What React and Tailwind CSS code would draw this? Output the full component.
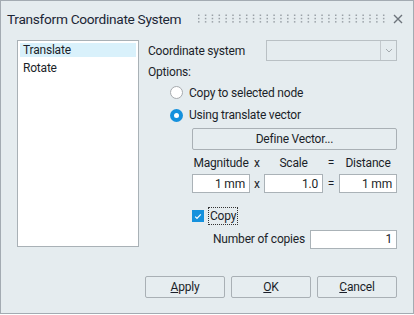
import React from "react";

function Radio({ checked }) {
  if (checked) {
    return (
      <span className="w-[13px] h-[13px] shrink-0 rounded-full bg-[#1591dd] flex items-center justify-center">
        <span className="w-[5px] h-[5px] rounded-full bg-white" />
      </span>
    );
  }
  return <span className="w-[13px] h-[13px] shrink-0 rounded-full bg-white border border-[#a6aaae]" />;
}

function Grip() {
  const cols = [];
  for (let i = 0; i < 28; i++) cols.push(i);
  return (
    <svg width="190" height="12" viewBox="0 0 190 12" className="block">
      {cols.map((i) =>
        [0, 1, 2].map((r) => (
          <rect key={i + "-" + r} x={i * 6.85} y={r * 3.3 + 1.5} width="1.5" height="1.5" fill="#9aa1a7" />
        ))
      )}
    </svg>
  );
}

function Btn({ children, className = "" }) {
  return (
    <div className={"h-[22px] border border-[#a9b0b5] rounded-[2px] bg-[#e6edf0] flex items-center justify-center text-[12px] tracking-[-0.2px] " + className}>
      {children}
    </div>
  );
}

function Field({ value, className = "" }) {
  return (
    <div className={"h-[19px] bg-white border border-[#aab2b7] flex items-center justify-end pr-[4px] text-[12px] whitespace-nowrap " + className}>
      {value}
    </div>
  );
}

export default function App() {
  return (
    <div className="w-[414px] h-[314px] bg-[#e5ecef] border border-[#a3abb2] font-['Roboto',sans-serif] text-[#1b1f29] flex flex-col whitespace-nowrap">
      {/* Title bar */}
      <div className="h-[36px] flex items-center pl-[6px] pr-[10px]">
        <span className="shrink-0 text-[13.7px] text-[#1c2635] tracking-[-0.3px]">Transform Coordinate System</span>
        <div className="ml-[17px] shrink-0">
          <Grip />
        </div>
        <div className="ml-auto">
          <svg width="10" height="10" viewBox="0 0 10 10" className="block">
            <path d="M1 1 L9 9 M9 1 L1 9" stroke="#6d747b" strokeWidth="1.4" />
          </svg>
        </div>
      </div>

      {/* Body */}
      <div className="flex pl-[16px] pr-[16px] mt-[3px]">
        <div className="w-[122px] h-[207px] shrink-0 bg-white border border-[#a9b1b6] p-[2px] text-[12px] tracking-[-0.2px]">
          <div className="h-[14px] bg-[#d9f1fb] pl-[3px] flex items-center">Translate</div>
          <div className="h-[21px] pl-[3px] flex items-center">Rotate</div>
        </div>

        <div className="ml-[9px] flex-1 flex flex-col text-[12px] tracking-[-0.2px]">
          <div className="h-[21px] flex items-center justify-between">
            <span>Coordinate system</span>
            <div className="w-[131px] h-[21px] border border-[#b9c0c4] bg-[#e5ecef] flex">
              <div className="flex-1" />
              <div className="w-[16px] border-l border-[#c3c9cd] flex items-center justify-center">
                <svg width="8" height="5" viewBox="0 0 8 5">
                  <path d="M1 1 L4 4 L7 1" stroke="#a4aaae" strokeWidth="1" fill="none" />
                </svg>
              </div>
            </div>
          </div>
          <div className="h-[21px] flex items-center">Options:</div>
          <div className="h-[21px] flex items-center pl-[22px] gap-[6px]">
            <Radio />
            <span>Copy to selected node</span>
          </div>
          <div className="h-[22px] mt-[1px] flex items-center pl-[22px] gap-[6px]">
            <Radio checked />
            <span>Using translate vector</span>
          </div>
          <div className="pl-[44px] mt-[2px]">
            <Btn className="w-[205px]">Define Vector...</Btn>
            <div className="grid grid-cols-[58px_14px_59px_16px_58px] mt-[2px]">
              <div className="h-[22px] flex items-center justify-center">Magnitude</div>
              <div className="h-[22px] flex items-center justify-center">x</div>
              <div className="h-[22px] flex items-center justify-center">Scale</div>
              <div className="h-[22px] flex items-center justify-center">=</div>
              <div className="h-[22px] flex items-center justify-center">Distance</div>
              <Field value="1 mm" />
              <div className="h-[19px] flex items-center justify-center">x</div>
              <Field value="1.0" />
              <div className="h-[19px] flex items-center justify-center">=</div>
              <Field value="1 mm" />
            </div>
            <div className="h-[18px] mt-[14px] flex items-center">
              <span className="w-[12px] h-[12px] bg-[#1591dd] flex items-center justify-center">
                <svg width="8" height="7" viewBox="0 0 8 7">
                  <path d="M1.2 3.6 L3 5.4 L6.8 1.4" stroke="white" strokeWidth="1.2" fill="none" />
                </svg>
              </span>
              <span className="ml-[4px] h-[18px] px-[1px] border border-dotted border-[#333] flex items-center">Copy</span>
            </div>
          </div>
          <div className="h-[18px] mt-[5px] flex items-center pl-[65px]">
            <span>Number of copies</span>
            <Field value="1" className="ml-auto w-[87px] h-[18px]" />
          </div>
        </div>
      </div>

      {/* Footer */}
      <div className="flex justify-end gap-[6px] pr-[16px] mt-[28px]">
        <Btn className="w-[80px]"><span><span className="underline">A</span>pply</span></Btn>
        <Btn className="w-[80px]"><span><span className="underline">O</span>K</span></Btn>
        <Btn className="w-[80px]"><span><span className="underline">C</span>ancel</span></Btn>
      </div>
    </div>
  );
}
